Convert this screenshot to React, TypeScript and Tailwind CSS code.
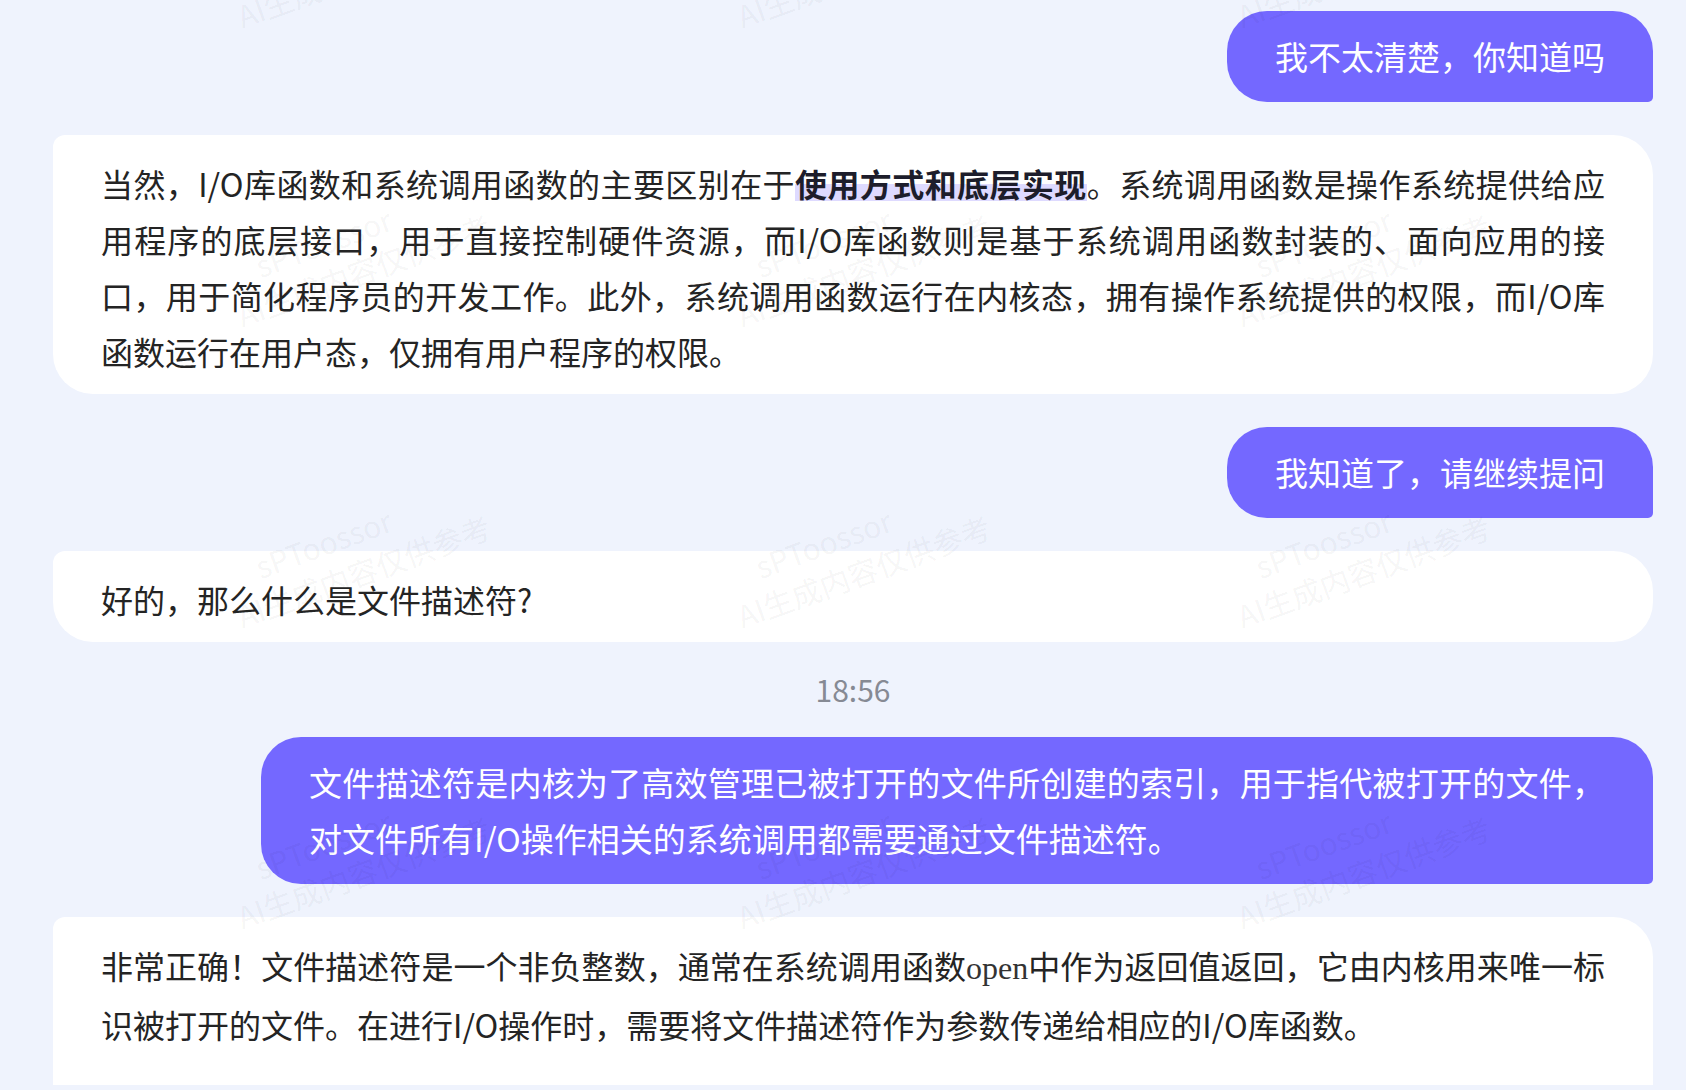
import React from "react";

const WM_XS = [-255, 245, 745, 1245];
const WM_YS = [35, 334, 635, 936];

function Watermarks() {
  const items: { x: number; y: number }[] = [];
  for (const y of WM_YS) for (const x of WM_XS) items.push({ x, y });
  return (
    <div className="pointer-events-none absolute inset-0 z-10 overflow-hidden">
      {items.map((p, i) => (
        <div
          key={i}
          className="absolute origin-bottom-left rotate-[-20deg] whitespace-nowrap text-[30px] leading-[40px] text-black/[0.05] font-['Noto_Sans_CJK_SC',sans-serif]"
          style={{ left: p.x, top: p.y - 80 }}
        >
          <div className="pl-[34px]">sPToossor</div>
          <div>AI生成内容仅供参考</div>
        </div>
      ))}
    </div>
  );
}

function Line({ children, last }: { children: React.ReactNode; last?: boolean }) {
  return (
    <div className={last ? "whitespace-nowrap" : "whitespace-nowrap text-justify [text-align-last:justify]"}>
      {children}
    </div>
  );
}

function UserBubble({ children, wide }: { children: React.ReactNode; wide?: boolean }) {
  return (
    <div
      className={
        "self-end rounded-[40px] rounded-br-[5px] bg-[#7468ff] px-12 pt-[17px] pb-[18px] text-[33px] leading-[56px] text-white " +
        (wide ? "w-[87%]" : "")
      }
    >
      {children}
    </div>
  );
}

function BotBubble({ children, extra }: { children: React.ReactNode; extra?: boolean }) {
  return (
    <div
      className={
        "w-full rounded-[40px] rounded-tl-[12px] bg-white px-12 pt-5 text-[32px] leading-[56px] text-[#242424] " +
        (extra ? "pb-[90px]" : "pb-[15px]")
      }
    >
      {children}
    </div>
  );
}

export default function App() {
  return (
    <div className="relative h-[1090px] w-full overflow-hidden bg-[#eff3fd] font-['Noto_Sans_CJK_SC',sans-serif]">
      <div className="h-[1085px] overflow-hidden">
        <div className="flex flex-col gap-[33px] pl-[53px] pr-[33px] pt-[11px]">
          <UserBubble>我不太清楚，你知道吗</UserBubble>

          <BotBubble>
            <Line>
              当然，I/O库函数和系统调用函数的主要区别在于
              <span className="font-bold text-[#1d1d2b] bg-[linear-gradient(transparent_52%,#dedaff_52%,#dedaff_90%,transparent_90%)]">
                使用方式和底层实现
              </span>
              。系统调用函数是操作系统提供给应
            </Line>
            <Line>用程序的底层接口，用于直接控制硬件资源，而I/O库函数则是基于系统调用函数封装的、面向应用的接</Line>
            <Line>口，用于简化程序员的开发工作。此外，系统调用函数运行在内核态，拥有操作系统提供的权限，而I/O库</Line>
            <Line last>函数运行在用户态，仅拥有用户程序的权限。</Line>
          </BotBubble>

          <UserBubble>我知道了，请继续提问</UserBubble>

          <BotBubble>
            <Line last>好的，那么什么是文件描述符?</Line>
          </BotBubble>

          <div className="text-center text-[30px] leading-[29px] text-[#868a94]">18:56</div>

          <UserBubble wide>
            <Line>文件描述符是内核为了高效管理已被打开的文件所创建的索引，用于指代被打开的文件，</Line>
            <Line last>对文件所有I/O操作相关的系统调用都需要通过文件描述符。</Line>
          </UserBubble>

          <BotBubble extra>
            <Line>
              非常正确！文件描述符是一个非负整数，通常在系统调用函数
              <span className="font-['Liberation_Serif',serif] text-[#333]">open</span>
              中作为返回值返回，它由内核用来唯一标
            </Line>
            <Line last>识被打开的文件。在进行I/O操作时，需要将文件描述符作为参数传递给相应的I/O库函数。</Line>
          </BotBubble>
        </div>
      </div>
      <Watermarks />
    </div>
  );
}
